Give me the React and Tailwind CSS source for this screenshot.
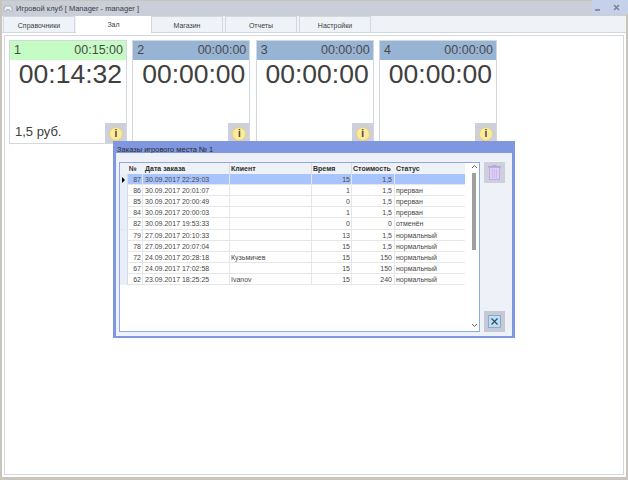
import React from "react";

const tabs = ["Справочники", "Зал", "Магазин", "Отчеты", "Настройки"];

const cards = [
  { id: 1, limit: "00:15:00", time: "00:14:32", price: "1,5 руб.", active: true },
  { id: 2, limit: "00:00:00", time: "00:00:00" },
  { id: 3, limit: "00:00:00", time: "00:00:00" },
  { id: 4, limit: "00:00:00", time: "00:00:00" },
];

const orders = [
  ["87", "30.09.2017 22:29:03", "", "15", "1,5", ""],
  ["86", "30.09.2017 20:01:07", "", "1", "1,5", "прерван"],
  ["85", "30.09.2017 20:00:49", "", "0", "1,5", "прерван"],
  ["84", "30.09.2017 20:00:03", "", "1", "1,5", "прерван"],
  ["82", "30.09.2017 19:53:33", "", "0", "0", "отменён"],
  ["79", "27.09.2017 20:10:33", "", "13", "1,5", "нормальный"],
  ["78", "27.09.2017 20:07:04", "", "15", "1,5", "нормальный"],
  ["72", "24.09.2017 20:28:18", "Кузьмичев", "15", "150", "нормальный"],
  ["67", "24.09.2017 17:02:58", "", "15", "150", "нормальный"],
  ["62", "23.09.2017 18:25:25", "Ivanov", "15", "240", "нормальный"],
];

const cols = "grid grid-cols-[8px_15px_87px_82px_40px_43px_70px]";

const Card = ({ card }) => {
  return (
    <div className="relative flex h-[104px] w-[118px] flex-col border border-[#d3d7e0] bg-white">
      <div
        className={`flex h-[19px] shrink-0 items-center justify-between pr-[3px] pl-[4px] text-[12.5px] text-[#4a4a4a] ${
          card.active ? "bg-[#c4fcc4]" : "bg-[#98b4d4]"
        }`}
      >
        <span>{card.id}</span>
        <span>{card.limit}</span>
      </div>
      <div className="mt-[-2px] pr-[4px] text-right text-[26.5px] leading-[32px] text-[#404040]">{card.time}</div>
      {card.price && (
        <div className="absolute bottom-[2px] left-[5px] text-[13px] leading-[18px] text-[#404040]">{card.price}</div>
      )}
      <div className="absolute right-0 bottom-0 flex h-[20px] w-[21px] items-center justify-center bg-[#ccd0da] pt-[1px] pl-[1px]">
        <div className="flex h-[14px] w-[14px] items-center justify-center rounded-full border border-[#f0d070] bg-[#fdeb9c] text-[10px] font-bold leading-none text-[#404040]">
          i
        </div>
      </div>
    </div>
  );
};

const OrdersDialog = () => {
  return (
    <div className="absolute top-[141px] left-[113px] flex h-[197px] w-[402px] flex-col border-x-[3px] border-b-[2px] border-[#7f96e0] bg-[#7f96e0]">
      <div className="h-[12px] shrink-0 pl-[1px] text-[7.5px] leading-[17px] text-[#2a2a2a]">Заказы игрового места № 1</div>
      <div className="flex flex-1 gap-[4px] bg-[#eef1f7] pt-[9px] pb-[4px] pl-[3px]">
        <div className="flex h-[170px] w-[361px] border border-[#8fa8e8] bg-white">
          <div className="w-[345px] shrink-0 text-[7px] leading-[11px] text-[#484848]">
            <div className={`${cols} h-[11px] bg-[#eef1f6] font-bold text-[#303030]`}>
              <div />
              <div className="pl-[1px]">№</div>
              <div className="border-r border-[#d8dce4] pl-[2px]">Дата заказа</div>
              <div className="border-r border-[#d8dce4] pl-[1px]">Клиент</div>
              <div className="border-r border-[#d8dce4] pl-[1px]">Время</div>
              <div className="pl-[1px]">Стоимость</div>
              <div className="pl-[1px]">Статус</div>
            </div>
            {orders.map((row, i) => (
              <div
                key={row[0]}
                className={`${cols} h-[11.11px] border-b border-[#e6e6e6] ${i === 0 ? "bg-[#a8c4fc]" : ""}`}
              >
                <div className="flex items-center justify-center border-r border-[#d8dce4] bg-[#e8eef8]">
                  {i === 0 && (
                    <div className="h-0 w-0 border-y-[3px] border-l-[3px] border-y-transparent border-l-black" />
                  )}
                </div>
                <div className="border-r border-[#e6e6e6] pr-[1px] text-right">{row[0]}</div>
                <div className="border-r border-[#e6e6e6] pl-[2px]">{row[1]}</div>
                <div className="border-r border-[#e6e6e6] pl-[1px]">{row[2]}</div>
                <div className="border-r border-[#e6e6e6] pr-[1px] text-right">{row[3]}</div>
                <div className="border-r border-[#e6e6e6] pr-[2px] text-right">{row[4]}</div>
                <div className="pl-[1px]">{row[5]}</div>
              </div>
            ))}
          </div>
          <div className="relative ml-[4px] flex flex-1 flex-col items-center justify-between pt-[1px] pb-[3px]">
            <svg width="7" height="6" viewBox="0 0 7 6">
              <path d="M1 4 L3.5 1.5 L6 4" fill="none" stroke="#606060" strokeWidth="1" />
            </svg>
            <div className="absolute top-[10px] h-[77px] w-[4px] bg-[#a0a0a0]" />
            <svg width="7" height="6" viewBox="0 0 7 6">
              <path d="M1 2 L3.5 4.5 L6 2" fill="none" stroke="#606060" strokeWidth="1" />
            </svg>
          </div>
        </div>
        <div className="flex h-[170px] w-[21px] flex-col justify-between">
          <div className="flex h-[21px] w-[21px] items-center justify-center bg-[#cdd0da]">
            <svg width="13" height="15" viewBox="0 0 13 15">
              <rect x="0" y="1" width="13" height="1.5" fill="#b9a6e0" />
              <rect x="4.5" y="0" width="4" height="1.5" fill="#b9a6e0" />
              <rect x="1.5" y="2.5" width="10" height="12" fill="#dccff6" stroke="#b9a6e0" strokeWidth="0.8" />
              <path d="M4.5 4v9M6.5 4v9M8.5 4v9" stroke="#c3b2e8" strokeWidth="0.7" />
            </svg>
          </div>
          <div className="flex h-[21px] w-[21px] items-center justify-center bg-[#c4c9d4]">
            <div className="flex h-[13px] w-[13px] items-center justify-center border border-[#8fa8c8] bg-[#b8e0fc]">
              <svg width="9" height="9" viewBox="0 0 9 9">
                <path d="M1.5 1.5 L7.5 7.5 M7.5 1.5 L1.5 7.5" stroke="#404850" strokeWidth="1.2" />
              </svg>
            </div>
          </div>
        </div>
      </div>
    </div>
  );
};

const App = () => {
  return (
    <div
      className="relative flex h-[480px] w-[628px] flex-col border-x-2 border-t border-b-[3px] border-[#c9c5bd] bg-[#eff2f7]"
      style={{ fontFamily: '"Liberation Sans", sans-serif' }}
    >
      <div className="relative flex h-[15px] shrink-0 items-center gap-[3px] bg-[#c9ced9] pl-[1px] text-[7.5px] text-[#404040]">
        <svg width="10" height="9" viewBox="0 0 10 9">
          <path d="M2 2 H8 L9.5 7 L7.5 7.5 L6.5 5.5 H3.5 L2.5 7.5 L0.5 7 Z" fill="#f0f2f6" stroke="#9aa0ac" strokeWidth="0.7" />
        </svg>
        <span>Игровой клуб [ Manager - manager ]</span>
        <div className="absolute top-[-1px] right-[-2px] flex h-[14px] w-[36px] items-center justify-end gap-[13.5px] bg-[#c5d0ea] pr-[8px]">
          <div className="mt-[6px] h-[2px] w-[5px] bg-[#8a90a0]" />
          <svg width="7" height="7" viewBox="0 0 7 7">
            <path d="M1 1 L6 6 M6 1 L1 6" stroke="#7c828e" strokeWidth="1.6" />
          </svg>
        </div>
      </div>

      <div className="flex h-[17px] shrink-0 items-end border-b border-[#d3d7e0] pl-[1px] text-[7px] text-[#404040]">
        {tabs.map((tab) =>
          tab === "Зал" ? (
            <div key={tab} className="mb-[-1px] flex h-[18px] w-[75px] items-start justify-center bg-white pt-[5px]">
              {tab}
            </div>
          ) : (
            <div
              key={tab}
              className="mr-[2px] flex h-[16px] w-[72px] items-center justify-center border-x border-t border-[#d3d7e0] bg-[#eff2f7] pt-[3px] first:mr-[1px]"
            >
              {tab}
            </div>
          ),
        )}
      </div>

      <div className="flex flex-1 bg-white p-[2px]">
        <div className="flex flex-1 gap-[5.33px] border border-[#d3d7e0] bg-white pt-[4px] pl-[4px]">
          {cards.map((card) => (
            <Card key={card.id} card={card} />
          ))}
        </div>
      </div>

      <div className="absolute top-[-1px] left-[-2px]">
        <OrdersDialog />
      </div>
    </div>
  );
};

export default App;
